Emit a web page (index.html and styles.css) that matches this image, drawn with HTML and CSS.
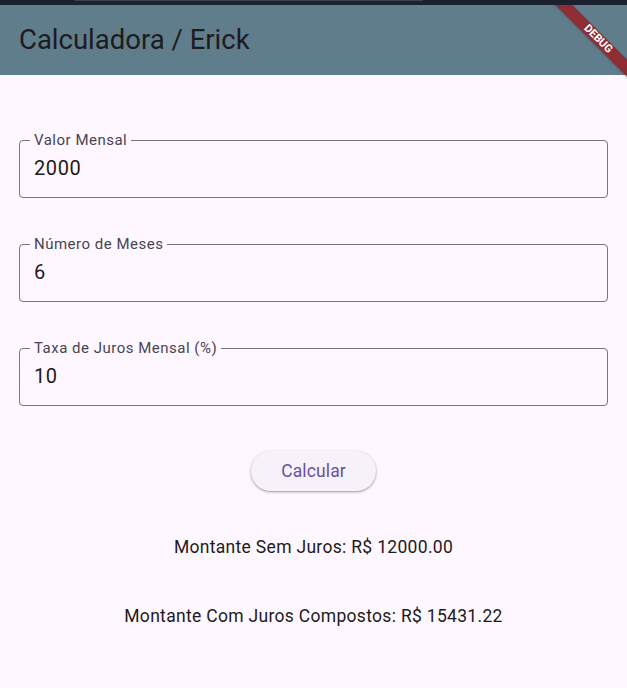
FILE: index.html
```html
<!DOCTYPE html>
<html lang="pt">
<head>
<meta charset="utf-8">
<link rel="stylesheet" href="styles.css">
<title>Calculadora / Erick</title>
</head>
<body>
<div class="topstrip"><div class="topline"></div></div>
<header class="appbar"><h1 class="title">Calculadora / Erick</h1></header>
<main class="content">
  <div class="field"><span class="label">Valor Mensal</span><div class="value">2000</div></div>
  <div class="field"><span class="label">Número de Meses</span><div class="value">6</div></div>
  <div class="field"><span class="label">Taxa de Juros Mensal (%)</span><div class="value">10</div></div>
  <button class="btn">Calcular</button>
  <p class="result r1">Montante Sem Juros: R$ 12000.00</p>
  <p class="result r2">Montante Com Juros Compostos: R$ 15431.22</p>
</main>
<div class="banner"><div class="ribbon">DEBUG</div></div>
</body>
</html>
```
FILE: styles.css
```css
* { box-sizing: border-box; }
html, body { margin: 0; padding: 0; }
body {
  background: #fef7ff;
  font-family: Roboto, "Noto Sans", sans-serif;
  color: #1d1b20;
  width: 627px;
  height: 688px;
  overflow: hidden;
  position: relative;
}
.topstrip {
  height: 5px;
  background: #1b2130;
  padding-left: 75px;
}
.topline {
  width: 348px;
  height: 1px;
  background: #3a4152;
}
.appbar {
  height: 70px;
  background: #607d8b;
  display: flex;
  align-items: center;
  padding-left: 19px;
}
.title {
  margin: 0;
  font-size: 27.5px;
  font-weight: 400;
  color: #1d1b20;
  line-height: 32px;
}
.content {
  padding: 65px 19px 0 19px;
  display: flex;
  flex-direction: column;
}
.field {
  position: relative;
  height: 58px;
  border: 1px solid #79747e;
  border-radius: 4px;
  margin-bottom: 46px;
  padding: 15px 0 0 14px;
}
.field:nth-of-type(3) { margin-bottom: 45px; }
.label {
  position: absolute;
  top: -8px;
  left: 10px;
  padding: 0 4px;
  background: #fef7ff;
  font-size: 15px;
  line-height: 15px;
  letter-spacing: 0.5px;
  color: #49454f;
}
.value {
  font-size: 20px;
  line-height: 24px;
  letter-spacing: 0.625px;
  color: #1d1b20;
}
.btn {
  align-self: center;
  width: 125px;
  height: 40px;
  border: none;
  border-radius: 20px;
  background: #f7f2fa;
  box-shadow: 0 1px 2px rgba(0,0,0,0.3), 0 1px 3px 1px rgba(0,0,0,0.08);
  color: #6750a4;
  font-family: Roboto, sans-serif;
  font-size: 17.5px;
  letter-spacing: 0.125px;
  padding: 0;
}
.result {
  margin: 0;
  text-align: center;
  font-size: 17.5px;
  line-height: 24px;
  letter-spacing: 0.31px;
  color: #1d1b20;
}
.r1 { margin-top: 44px; }
.r2 { margin-top: 45px; }
.banner {
  position: absolute;
  top: 5px;
  right: 0;
  width: 90px;
  height: 90px;
  overflow: hidden;
  pointer-events: none;
}
.ribbon {
  position: absolute;
  left: 1px;
  top: 28px;
  width: 120px;
  height: 12px;
  background: #8f2d34;
  color: #fff;
  font-family: Roboto, sans-serif;
  font-weight: 700;
  font-size: 11px;
  line-height: 12px;
  text-align: center;
  transform: rotate(45deg);
  box-shadow: 0 1px 2px rgba(0,0,0,0.2);
}
```
